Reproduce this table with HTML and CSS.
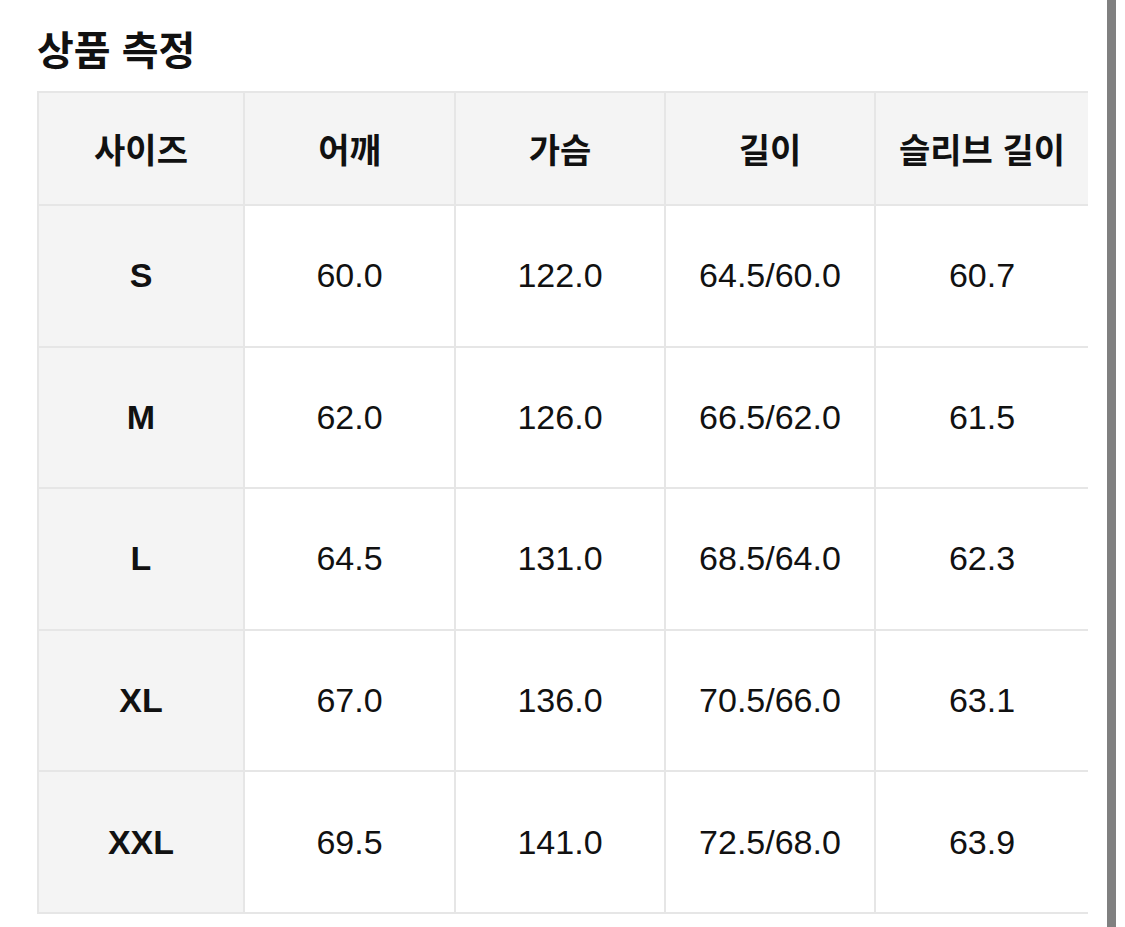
FILE: index.html
```html
<!DOCTYPE html>
<html lang="ko">
<head>
<meta charset="utf-8">
<title>상품 측정</title>
<link rel="stylesheet" href="styles.css">
</head>
<body>
<div class="page">
  <main class="content">
    <h1 class="title">상품 측정</h1>
    <table class="size-table">
      <colgroup>
        <col class="c1"><col class="c2"><col class="c3"><col class="c4"><col class="c5">
      </colgroup>
      <thead>
        <tr class="head-row">
          <th>사이즈</th><th>어깨</th><th>가슴</th><th>길이</th><th>슬리브 길이</th>
        </tr>
      </thead>
      <tbody>
        <tr><th>S</th><td>60.0</td><td>122.0</td><td>64.5/60.0</td><td>60.7</td></tr>
        <tr><th>M</th><td>62.0</td><td>126.0</td><td>66.5/62.0</td><td>61.5</td></tr>
        <tr><th>L</th><td>64.5</td><td>131.0</td><td>68.5/64.0</td><td>62.3</td></tr>
        <tr><th>XL</th><td>67.0</td><td>136.0</td><td>70.5/66.0</td><td>63.1</td></tr>
        <tr><th>XXL</th><td>69.5</td><td>141.0</td><td>72.5/68.0</td><td>63.9</td></tr>
      </tbody>
    </table>
  </main>
  <div class="scrollbar"></div>
</div>
</body>
</html>
```

FILE: styles.css
```css
html, body {
  margin: 0;
  padding: 0;
  background: #ffffff;
}
body {
  width: 1125px;
  height: 927px;
  overflow: hidden;
  color: #111111;
  font-family: "Noto Sans CJK KR", "Noto Sans", sans-serif;
}
.page {
  display: flex;
  height: 927px;
  padding-right: 9px;
  box-sizing: border-box;
}
.content {
  flex: 1;
  padding: 24px 19px 0 37px;
}
.scrollbar {
  width: 9px;
  background: #808080;
}
.title {
  margin: 0 0 19px 0;
  font-size: 40px;
  line-height: 48px;
  font-weight: 700;
}
.size-table {
  border-collapse: separate;
  border-spacing: 0;
  table-layout: fixed;
  width: 1051px;
  border-bottom: 2px solid #e6e6e6;
}
.c1 { width: 206px; }
.c2 { width: 211px; }
.c3 { width: 210px; }
.c4 { width: 210px; }
.c5 { width: 214px; }
.size-table th,
.size-table td {
  border-left: 2px solid #e6e6e6;
  border-top: 2px solid #e6e6e6;
  padding: 0;
  text-align: center;
  vertical-align: middle;
  height: 139.6px;
}
.head-row th {
  height: 111px;
  background: #f4f4f4;
  font-family: "Noto Sans CJK KR", sans-serif;
  font-size: 34px;
  font-weight: 700;
}
tbody th {
  background: #f4f4f4;
  font-family: "Liberation Sans", Arial, sans-serif;
  font-size: 34px;
  font-weight: 700;
}
tbody td {
  font-family: "Liberation Sans", Arial, sans-serif;
  font-size: 34px;
  font-weight: 400;
}
```
